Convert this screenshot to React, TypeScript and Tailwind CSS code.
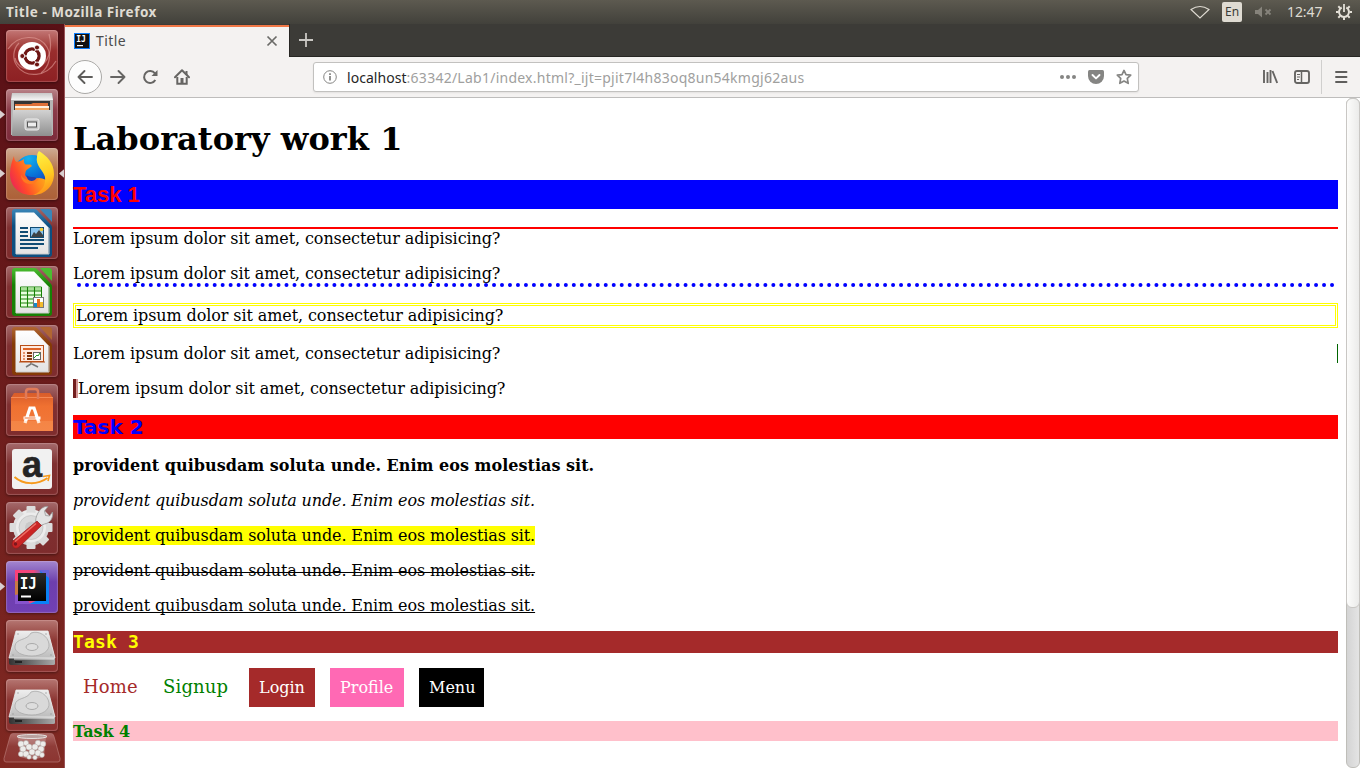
import React from "react";

const LOREM = "Lorem ipsum dolor sit amet, consectetur adipisicing?";
const PROVIDENT = "provident quibusdam soluta unde. Enim eos molestias sit.";

function UbuntuIcon() {
  return (
    <svg viewBox="0 0 52 52" className="size-full">
      <g fill="none" stroke="#e9a9a4" strokeOpacity=".55" strokeWidth="1.2">
        <path d="M2 19C12 4 33 4 41 17c5 9 2 20-6 26" />
        <path d="M43 4c4 15 0 29-12 34-10 4-20-1-22-10" />
        <path d="M50 31C40 48 20 48 11 36 6 29 7 19 13 13" />
      </g>
      <circle cx="26" cy="26" r="14" fill="#fff" />
      <circle cx="26" cy="26" r="7" fill="none" stroke="#6d1513" strokeWidth="3.4" />
      <path d="M26 26 18 26M26 26 30 19M26 26 30 33" stroke="#fff" strokeWidth="1" />
      <circle cx="26" cy="26" r="5.4" fill="#fff" />
      <g fill="#6d1513" stroke="#fff" strokeWidth=".9">
        <circle cx="16.3" cy="26" r="2.5" />
        <circle cx="31" cy="17.5" r="2.5" />
        <circle cx="31" cy="34.5" r="2.5" />
      </g>
    </svg>
  );
}

function FilesIcon() {
  return (
    <svg viewBox="0 0 52 52" className="size-full">
      <defs>
        <linearGradient id="fl" x2="0" y2="1"><stop stopColor="#d2d2d2" /><stop offset="1" stopColor="#8f8f8f" /></linearGradient>
        <linearGradient id="ft" x2="0" y2="1"><stop stopColor="#c9c9c9" /><stop offset="1" stopColor="#f5f5f5" /></linearGradient>
      </defs>
      <path d="M6 4h40l1 7v35H5V11z" fill="#777" />
      <path d="M6 4h40l1 7H5z" fill="url(#ft)" />
      <path d="M5 11h42v35H5z" fill="#b5b5b5" />
      <path d="M8 12h36v11H8z" fill="#343434" />
      <path d="M9 15h16l2-1h15v8H9z" fill="#df7038" />
      <path d="M9 17h34v2H9z" fill="#fff1df" />
      <path d="M9 19h34v3H9z" fill="#f2a865" />
      <path d="M7 21h38l1 26H6z" fill="url(#fl)" />
      <rect x="19" y="30" width="14" height="11" rx="2" fill="#c6c6c6" stroke="#eee" />
      <rect x="21.5" y="33" width="9" height="5" fill="#eee" stroke="#555" />
    </svg>
  );
}

function FirefoxIcon() {
  return (
    <svg viewBox="0 0 52 52" className="size-full">
      <defs>
        <linearGradient id="ff" x1="1" y1=".3" x2="0" y2=".8">
          <stop stopColor="#ffc21b" /><stop offset=".4" stopColor="#ff8a1c" /><stop offset=".7" stopColor="#ff4a2b" /><stop offset="1" stopColor="#e8205c" />
        </linearGradient>
        <radialGradient id="fg" cx=".4" cy=".1" r="1"><stop stopColor="#12b2ef" /><stop offset=".55" stopColor="#0868d4" /><stop offset="1" stopColor="#2c2489" /></radialGradient>
        <linearGradient id="fy" x2=".2" y2="1"><stop stopColor="#fff448" /><stop offset=".6" stopColor="#ffcf22" /><stop offset="1" stopColor="#ff981a" /></linearGradient>
      </defs>
      <circle cx="26" cy="25" r="18" fill="url(#fg)" />
      <path d="M8 8c0 3 1 5 2.500 6 3-1 5-1 7.500-3-.5 3 0 4 1.500 5.500h5l1.500 1.500-5.500 4c-1.500 2-1 4-1.500 5 2 4 7 6 14 3 5 0 9 4 11 3-4 9-11 14-19 14C13 47 4 38 4 26c0-7 2-13 4-18z" fill="url(#ff)" />
      <path d="M33 3c8 5 15 12 15 23 0 12-9 21-21 21 9-3 13-10 12-18-2-7-10-12-8-20 0-3 1-5 2-6z" fill="url(#fy)" />
      <path d="M15 27c3 5 8 6 12 4 2-1 4-1 6-1-2 4-5 6-9 6-5 0-9-4-9-9z" fill="#ff7a20" />
      <path d="M20.500 27c3 3 7 1 10 3-1 2-3 3-5 3-3 0-5-3-5-6z" fill="#263eab" />
    </svg>
  );
}

function PageIcon({ c, dark, id, children }: { c: string; dark: string; id: string; children: React.ReactNode }) {
  return (
    <svg viewBox="0 0 52 52" className="size-full">
      <defs>
        <linearGradient id={id} x2="0" y2="1"><stop stopColor={c} /><stop offset=".35" stopColor={dark} /><stop offset="1" stopColor={dark} /></linearGradient>
        <linearGradient id={id + "p"} x2="0" y2="1"><stop stopColor="#fff" /><stop offset="1" stopColor="#e3e3e3" /></linearGradient>
      </defs>
      <path d="M9 2h19q2 0 3 1l14 15q1 1 1 3v26q0 3-3 3H9q-3 0-3-3V5q0-3 3-3z" fill={`url(#${id})`} />
      <path d="M9.500 5.500H28L42.500 20.500V47h-33z" fill={`url(#${id}p)`} />
      <path d="M10 47h33V21" fill="none" stroke="#ccc" />
      <path d="M34 2h9q3 0 3 3v10z" fill={c} />
      {children}
    </svg>
  );
}

function WriterIcon() {
  return (
    <PageIcon id="wr" c="#3b86b8" dark="#0d4f80">
      <path d="M14 21h8M14 25h8M14 29h8M14 33h24M14 37h24M14 41h18" stroke="#104c74" strokeWidth="2" />
      <rect x="24.500" y="20.500" width="13" height="10" fill="#8bc4ed" stroke="#104c74" />
      <path d="m25 30 3-5 2 2 3-4 4 5v2z" fill="#3d4244" />
      <circle cx="35.500" cy="22.500" r="1.800" fill="#f3cc38" />
    </PageIcon>
  );
}

function CalcIcon() {
  return (
    <PageIcon id="ca" c="#4cbd31" dark="#178105">
      <path d="M14.500 21h21v20h-21z" fill="#eaffe0" stroke="#178105" />
      <path d="M15 21.500h20v3H15z" fill="#a8df98" />
      <path d="M14 25h22M14 29h22M14 33h22M14 37h22M21.500 21v20M28.500 21v20" stroke="#178105" strokeWidth="1.100" />
      <rect x="27.500" y="31.500" width="10" height="10" fill="#fff" stroke="#777" />
      <path d="M28 37h3v4h-3z" fill="#168bc8" /><path d="M31 33h3v8h-3z" fill="#e86f1c" /><path d="M34 36h3v5h-3z" fill="#f3bc2e" />
    </PageIcon>
  );
}

function ImpressIcon() {
  return (
    <PageIcon id="im" c="#b16632" dark="#853a06">
      <rect x="14.500" y="20.500" width="23" height="16" fill="#ffeade" stroke="#b84e16" />
      <path d="M17 24h18" stroke="#dd6325" strokeWidth="2" />
      <path d="M17 28h2M17 31h2M17 34h2" stroke="#e4936c" strokeWidth="2" />
      <path d="M21 28h5M21 31h5M21 34h5" stroke="#84360b" strokeWidth="2" />
      <rect x="27.500" y="27.500" width="7" height="7" fill="#fff" stroke="#666" />
      <path d="m28 33 3-3 1 1 2-3" stroke="#249c23" fill="none" />
      <path d="M25 37v2l-5 3m6-3 6 3" stroke="#777" strokeWidth="1.500" fill="none" />
      <path d="M13 37h26" stroke="#b84e16" />
    </PageIcon>
  );
}

function SoftwareIcon() {
  return (
    <svg viewBox="0 0 52 52" className="size-full">
      <defs><linearGradient id="sw" x2="0" y2="1"><stop stopColor="#d85c2a" /><stop offset=".35" stopColor="#f07131" /><stop offset="1" stopColor="#f27a3c" /></linearGradient></defs>
      <path d="M8 9h36l3 5v33H5V14z" fill="url(#sw)" />
      <path d="M5 13.500h42" stroke="#ff9a65" strokeWidth=".7" />
      <path d="M20 15V8q0-3 3-3h6q3 0 3 3v7" fill="none" stroke="#e07a58" strokeWidth="2.500" />
      <path d="m19 39 5-15h4l5 15M17.500 34h17" fill="none" stroke="#fff" strokeWidth="3.200" />
      <path d="M18.500 34h11" stroke="#ef7133" strokeWidth="1" />
      <path d="M5 37h42v10H5z" fill="#ffb070" fillOpacity=".25" />
    </svg>
  );
}

function AmazonIcon() {
  return (
    <svg viewBox="0 0 52 52" className="size-full">
      <rect x="6" y="6" width="40" height="40" rx="3" fill="#f1f1f1" />
      <text x="26" y="33.500" textAnchor="middle" fontFamily="Liberation Sans, sans-serif" fontWeight="bold" fontSize="36" fill="#242424" stroke="#242424" strokeWidth=".6">a</text>
      <path d="M8.500 34c9 8 23 8 33 1" fill="none" stroke="#f69a1c" strokeWidth="2" />
      <path d="m37 33.500 6.500-1-1.500 5.500" fill="none" stroke="#f69a1c" strokeWidth="1.600" />
    </svg>
  );
}

function SettingsIcon() {
  return (
    <svg viewBox="0 0 52 52" className="size-full">
      <defs><linearGradient id="gw" x2="0" y2="1"><stop stopColor="#efefef" /><stop offset="1" stopColor="#c8c8c8" /></linearGradient></defs>
      <g transform="translate(25 25.500)">
        <circle r="18" fill="url(#gw)" />
        {[0, 45, 90, 135].map((a) => <rect key={a} x="-4.500" y="-21.500" width="9" height="43" rx="1" fill="#dcdcdc" transform={`rotate(${a})`} />)}
        <circle r="15" fill="#ececec" /><circle r="12" fill="#dadada" stroke="#bbb" strokeWidth=".6" /><circle r="6" fill="#c9c9c9" />
      </g>
      <path d="M30 22c-1-3 0-8 2-11 3-5 6-7 10-6.500L38.500 9l1 4.500 4 .5 3-4c1 7-3 11-8 12l-5 2z" fill="#e4e4e4" stroke="#999" strokeWidth=".8" />
      <path d="m31 19 4.500 4.500L13 45c-4 3.500-9-1-6-6z" fill="#ca2525" stroke="#951b1b" strokeWidth=".7" />
      <path d="M30 21.500 9 39.500" stroke="#ee7066" strokeWidth="1.600" />
      <circle cx="9.500" cy="42" r="1.700" fill="#7d171d" />
    </svg>
  );
}

function IdeaIcon({ small = false }: { small?: boolean }) {
  if (small) {
    return (
      <svg viewBox="0 0 16 16" className="size-4">
        <path fill="#087bfa" d="M0 0h16v16H0z" /><path fill="#111" d="M1 1h14v14H1z" />
        <text x="2.200" y="8.800" fontFamily="DejaVu Sans Mono, monospace" fontWeight="bold" fontSize="8" fill="#fff">IJ</text>
        <path d="M3 12h6v1.200H3z" fill="#fff" />
      </svg>
    );
  }
  return (
    <svg viewBox="0 0 52 52" className="size-full">
      <defs>
        <linearGradient id="ij"><stop stopColor="#fb3f78" /><stop offset=".55" stopColor="#ee497e" /><stop offset="1" stopColor="#087cfa" /></linearGradient>
        <linearGradient id="ik" x2="0" y2="1"><stop stopColor="#2a2a2a" /><stop offset="1" stopColor="#000" /></linearGradient>
      </defs>
      <path d="M9 9h34v34H9z" fill="url(#ij)" />
      <path d="M9 20h7v13l-7 5z" fill="#c97943" /><path d="M9 34l9-2 6 11H9z" fill="#8753cd" />
      <path d="m34 9 9 7v27H23l16-7z" fill="#0a82f7" /><path d="m33 9 10 8v-8z" fill="#6a64d8" />
      <path d="M12 12h28v28H12z" fill="url(#ik)" />
      <text x="13.800" y="28" textLength="17" lengthAdjust="spacingAndGlyphs" fontFamily="DejaVu Sans Mono, monospace" fontWeight="bold" fontSize="16.500" fill="#fff">IJ</text>
      <path d="M15 34.500h10v2H15z" fill="#fff" />
    </svg>
  );
}

function DriveIcon({ id }: { id: string }) {
  return (
    <svg viewBox="0 0 52 52" className="size-full">
      <defs><linearGradient id={id} x2="0" y2="1"><stop stopColor="#eee" /><stop offset="1" stopColor="#bdbdbd" /></linearGradient><linearGradient id={id + "b"}><stop stopColor="#333" /><stop offset="1" stopColor="#aaa" /></linearGradient></defs>
      <path d="M10 11h32l7 27v6q0 1-2 1H5q-2 0-2-2v-5z" fill={`url(#${id}b)`} />
      <path d="M10 11h32l7 27H3z" fill={`url(#${id})`} stroke="#eee" strokeWidth=".8" />
      <path d="M25 13c8-3 17 3 18 11 1 7-7 12-17 12S8 32 9 26c1-8 12-5 16-13z" fill="#d9d9d9" stroke="#aaa" strokeWidth=".8" />
      <ellipse cx="26" cy="27" rx="6" ry="3.500" fill="#ddd" stroke="#aaa" />
      <path d="M8 39h40" stroke="#fff" strokeWidth=".8" /><path d="M9 41h7v2H9z" fill="#222" />
      <g fill="#999"><circle cx="12" cy="14" r=".7" /><circle cx="40" cy="14" r=".7" /><circle cx="7" cy="35" r=".7" /><circle cx="45" cy="35" r=".7" /></g>
    </svg>
  );
}

const paper: [number, number, number][] = [
  [18, 11, 3], [23, 10, 2.6], [35, 10, 2.8], [40, 11, 2.8], [20, 16, 3], [26, 14, 3], [32, 14, 3], [38, 16, 3],
  [18, 21, 2.6], [23, 21, 3], [29, 19, 3], [35, 20, 3], [39, 22, 2.4], [26, 24, 2.2], [32, 24.5, 2.2],
];

function TrashIcon() {
  return (
    <svg viewBox="0 0 58 30" className="h-[30px] w-[58px]">
      <defs><linearGradient id="tr" x2="0" y2="1"><stop stopColor="#b06a67" /><stop offset=".45" stopColor="#8f3c38" /><stop offset="1" stopColor="#8c3531" /></linearGradient></defs>
      <path d="M10 .5h38q2.500 0 3 3l6 22q.500 3.500-2 3.500H3q-2.500 0-2-3.500l6-22q.500-3 3-3z" fill="url(#tr)" stroke="#b77774" strokeOpacity=".7" />
      <path d="M15 4h28l-2 20q-12 4-24 0z" fill="#d5b7b5" fillOpacity=".4" />
      <g fill="#edecea" stroke="#b5b0ae" strokeWidth=".5">
        {paper.map(([x, y, r], i) => <circle key={i} cx={x} cy={y} r={r} />)}
      </g>
      <ellipse cx="29" cy="3.500" rx="15" ry="2" fill="#b9a09e" stroke="#e6e0df" />
    </svg>
  );
}

function Arrow({ side }: { side: "l" | "r" }) {
  return (
    <svg viewBox="0 0 6 10" className={side === "l" ? "absolute -left-[6px] top-[21px] h-[9px] w-[5px]" : "absolute -right-[6px] top-[21px] h-[9px] w-[5px]"}>
      <path d={side === "l" ? "M0 0v10l6-5z" : "M6 0v10L0 5z"} fill="#d9cfd0" />
    </svg>
  );
}

const TILE = "relative size-[52px] shrink-0 rounded-[4px] shadow-[inset_0_0_1px_1px_rgba(255,220,220,0.24),0_1px_3px_rgba(0,0,0,0.4)]";
const GLASS = "bg-linear-to-b from-[#a46a6c] via-[#7f3031] via-40% to-[#7e2c2d]";

const launcher = [
  { icon: <UbuntuIcon />, bg: "bg-linear-to-b from-[#c37775] via-[#992d2d] via-40% to-[#8d2023]" },
  { icon: <FilesIcon />, bg: "bg-linear-to-b from-[#b88288] via-[#8b3b49] via-40% to-[#7c2b3b]", left: true },
  { icon: <FirefoxIcon />, bg: "bg-linear-to-b from-[#ceac94] via-[#b8764c] via-40% to-[#ac6038]", left: true, right: true },
  { icon: <WriterIcon />, bg: GLASS },
  { icon: <CalcIcon />, bg: GLASS },
  { icon: <ImpressIcon />, bg: GLASS },
  { icon: <SoftwareIcon />, bg: GLASS },
  { icon: <AmazonIcon />, bg: GLASS },
  { icon: <SettingsIcon />, bg: GLASS },
  { icon: <IdeaIcon />, bg: "bg-linear-to-b from-[#a486cf] via-[#6d3eac] via-40% to-[#7140b4]", left: true },
  { icon: <DriveIcon id="d1" />, bg: "bg-linear-to-b from-[#b57672] via-[#8c3633] via-40% to-[#8a302e]" },
  { icon: <DriveIcon id="d2" />, bg: "bg-linear-to-b from-[#b57672] via-[#8c3633] via-40% to-[#8a302e]" },
];

function TopPanel() {
  return (
    <header className="flex h-6 shrink-0 items-center justify-between bg-linear-to-b from-[#5d5a50] to-[#42413b] pr-2 pl-[6px] text-[#dfdbd2]">
      <span className="text-[13.5px] font-bold leading-6 tracking-[0.52px]">Title - Mozilla Firefox</span>
      <div className="flex items-center">
        <svg viewBox="0 0 20 14" className="h-[14px] w-5"><path d="M1 4.500Q10-1.500 19 4.500L10 13z" fill="none" stroke="#dfdbd2" strokeWidth="1.100" /></svg>
        <span className="ml-3 flex h-5 w-5 items-center justify-center rounded-[2px] bg-[#dfdbd2] text-[12px] leading-5 text-[#3c3b37]">En</span>
        <svg viewBox="0 0 18 12" className="ml-3 h-3 w-[18px]"><path d="M1 4h3l4-3.500v11L4 8H1z" fill="#86837b" /><path d="m11.500 3.500 5 5m0-5-5 5" stroke="#86837b" strokeWidth="1.800" /></svg>
        <span className="ml-[15px] w-[36px] text-[14px] leading-6 tracking-[-0.1px]">12:47</span>
        <svg viewBox="0 0 16 16" className="ml-[13px] size-4" fill="none" stroke="#e4e0d7">
          <path d="M5.700 3.500a5 5 0 1 0 4.600 0" strokeWidth="2" /><path d="M8 0v8" strokeWidth="1.800" />
          <path d="m2.300 2.300 1.800 1.800m9.600-1.800-1.800 1.800M0 8h2.500m11 0H16M2.300 13.700l1.800-1.800m9.600 1.800-1.800-1.800M8 13.500V16" strokeWidth="2" />
        </svg>
      </div>
    </header>
  );
}

function TabStrip() {
  return (
    <div className="flex h-[33px] shrink-0 bg-[#3c3b37]">
      <div className="mt-px flex w-56 items-center border-t-2 border-[#f07746] bg-[#f4f2f1] pb-[2px] pl-[9px]">
        <IdeaIcon small />
        <span className="ml-[6px] flex-1 text-[14px] leading-5 tracking-[0.4px] text-[#4c4c4c]">Title</span>
        <svg viewBox="0 0 12 12" className="mr-[11px] size-3"><path d="m1.500 1.500 9 9m0-9-9 9" stroke="#6b6b68" strokeWidth="1.700" /></svg>
      </div>
      <div className="flex flex-1 items-center border-b border-l border-[#272623] pl-[9px]">
        <svg viewBox="0 0 14 14" className="size-[14px]"><path d="M7 0v14M0 7h14" stroke="#cac8c4" strokeWidth="1.800" /></svg>
      </div>
    </div>
  );
}

function Toolbar() {
  return (
    <div className="flex h-[41px] shrink-0 items-center border-b border-[#bebdbc] bg-[#f4f2f1] pr-[11px] pl-[3px]">
      <div className="flex size-[34px] items-center justify-center rounded-full border border-[#aaa9a7] bg-[#fdfdfd]">
        <svg viewBox="0 0 16 16" className="size-4" fill="none" stroke="#5e5d5b" strokeWidth="1.900" strokeLinecap="round" strokeLinejoin="round"><path d="M15 8H1.500M7.500 2l-6 6 6 6" /></svg>
      </div>
      <svg viewBox="0 0 16 16" className="ml-2 size-4" fill="none" stroke="#666563" strokeWidth="1.900" strokeLinecap="round" strokeLinejoin="round"><path d="M1 8h13.500M8.500 2l6 6-6 6" /></svg>
      <svg viewBox="0 0 16 16" className="ml-4 size-4"><path d="M13.300 11a6 6 0 1 1-.4-6.600" fill="none" stroke="#666563" strokeWidth="2" /><path d="M15.500 1v6h-6z" fill="#666563" /></svg>
      <svg viewBox="0 0 16 16" className="ml-4 size-4"><path d="M1 8.200 8 1.300l7 6.900" fill="none" stroke="#666563" strokeWidth="2" strokeLinecap="round" strokeLinejoin="round" /><path d="M12.500 2v4M3.300 8v6.800h9.400V8" fill="none" stroke="#666563" strokeWidth="2" /><path d="M6.500 9h3v6h-3z" fill="#666563" /></svg>
      <div className="ml-[123px] flex h-[30px] w-[826px] items-center rounded-[3px] border border-[#c2c1bf] bg-white pr-[6px] pl-[9px] shadow-[0_1px_2px_rgba(0,0,0,0.07)]">
        <svg viewBox="0 0 14 14" className="size-[14px]" fill="none" stroke="#858583"><circle cx="7" cy="7" r="6.300" /><path d="M7 6v4.500" strokeWidth="1.800" /><path d="M7 3.200V5" strokeWidth="1.800" /></svg>
        <span className="ml-[10px] flex-1 pt-px text-[14px] leading-5 tracking-[0.25px] text-[#a0a09e]"><span className="tracking-[0.05px] text-[#262626]">localhost</span>:63342/Lab1/index.html?_ijt=pjit7l4h83oq8un54kmgj62aus</span>
        <svg viewBox="0 0 16 4" className="h-1 w-4" fill="#858583"><circle cx="2" cy="2" r="2" /><circle cx="8" cy="2" r="2" /><circle cx="14" cy="2" r="2" /></svg>
        <svg viewBox="0 0 16 16" className="ml-3 size-4"><path d="M1.500 1h13Q16 1 16 2.500V7a8 8 0 0 1-16 0V2.500Q0 1 1.500 1z" fill="#858583" /><path d="m4.500 6 3.500 3.400L11.500 6" stroke="#fff" strokeWidth="1.900" strokeLinecap="round" strokeLinejoin="round" fill="none" /></svg>
        <svg viewBox="0 0 16 16" className="ml-3 size-4"><path d="m8 1.400 2 4.200 4.700.6-3.400 3.200.9 4.900L8 12l-4.200 2.300.9-4.900-3.400-3.200L6 5.600z" fill="none" stroke="#858583" strokeWidth="1.700" strokeLinejoin="round" /></svg>
      </div>
      <div className="flex flex-1 items-center justify-end">
        <svg viewBox="0 0 16 16" className="size-4" fill="none" stroke="#666563" strokeWidth="1.900"><path d="M2 1v13M5.500 3v11M8.500 1v13M10.500 2l4.700 12" /></svg>
        <svg viewBox="0 0 16 16" className="ml-4 size-4" fill="none" stroke="#666563"><rect x="1" y="2" width="14" height="12" rx="2" strokeWidth="1.900" /><path d="M7.500 2v12" strokeWidth="1.500" /><path d="M3 5.500h3M3 8h3M3 10.500h2" /></svg>
        <div className="ml-[11px] h-[34px] w-px bg-[#d0cfce]" />
        <svg viewBox="0 0 14 12" className="ml-[13px] h-3 w-[14px]"><path d="M1 1h10.500M1 6h10.500M1 11h10.500" stroke="#5f5e5c" strokeWidth="1.900" strokeLinecap="round" /></svg>
      </div>
    </div>
  );
}

function DottedRule() {
  return (
    <svg viewBox="0 0 1265 4" className="block h-1 w-full">
      <path d="M6 2h1253.200" stroke="#00f" strokeWidth="4" strokeLinecap="round" strokeDasharray="0 7.981" />
    </svg>
  );
}

function Page() {
  return (
    <main className="w-[1281px] shrink-0 overflow-hidden bg-white px-2 pt-[22px] font-['DejaVu_Serif',serif] text-[16px] leading-[19px] text-black">
      <h1 className="h-[38px] text-[32px] font-bold leading-[38px] tracking-[0.05px]">Laboratory work 1</h1>
      <h2 className="mt-[22px] h-[29px] bg-[#00f] font-['Liberation_Sans',sans-serif] text-[22px] font-bold leading-[29px] text-[#f00]">Task 1</h2>
      <div className="tracking-[-0.098px]">
        <p className="mt-[18px] border-t-2 border-[#f00]">{LOREM}</p>
        <div className="mt-4"><p>{LOREM}</p><DottedRule /></div>
        <p className="mt-4 border-[3px] border-double border-[#ff0]">{LOREM}</p>
        <p className="mt-4 border-r border-[#006400]">{LOREM}</p>
        <div className="mt-4 flex"><i className="w-[3px] bg-[#731d1d]" /><i className="w-[2px] bg-[#d29595]" /><p>{LOREM}</p></div>
      </div>
      <h3 className="mt-[17px] h-6 bg-[#f00] font-['DejaVu_Sans',sans-serif] text-[20px] font-bold leading-6 text-[#00f]">Task 2</h3>
      <p className="mt-[17px] font-bold tracking-[0.02px]">{PROVIDENT}</p>
      <div className="tracking-[-0.125px]">
        <p className="mt-4 italic">{PROVIDENT}</p>
        <p className="mt-4"><span className="bg-[#ff0]">{PROVIDENT}</span></p>
        <p className="mt-4 underline decoration-1 underline-offset-[-4px] [text-decoration-skip-ink:none]">{PROVIDENT}</p>
        <p className="mt-4 underline [text-decoration-skip-ink:none]">{PROVIDENT}</p>
      </div>
      <h4 className="mt-4 h-[22px] bg-[#a52a2a] font-['DejaVu_Sans_Mono',monospace] text-[18px] font-bold leading-[22px] tracking-[0.15px] text-[#ff0]">Task 3</h4>
      <nav className="mt-[15px] flex h-[39px] items-center">
        <a className="w-20 pb-[2px] pl-[10px] text-[18px] tracking-[0.1px] text-[#a52a2a]">Home</a>
        <a className="w-24 pb-[2px] pl-[10px] text-[18px] tracking-[0.15px] text-[#008000]">Signup</a>
        <a className="w-[66px] bg-[#a52a2a] p-[10px] text-white">Login</a>
        <a className="ml-[15px] w-[74px] bg-[#ff69b4] p-[10px] text-white">Profile</a>
        <a className="ml-[15px] w-[65px] bg-black p-[10px] text-white">Menu</a>
      </nav>
      <h5 className="mt-[14px] h-5 bg-[#ffc0cb] pt-px font-bold leading-5 tracking-[-0.1px] text-[#008000]">Task 4</h5>
    </main>
  );
}

export default function App() {
  return (
    <div className="flex h-[768px] w-[1360px] flex-col overflow-hidden font-['Noto_Sans',sans-serif]">
      <TopPanel />
      <div className="flex min-h-0 flex-1">
        <aside className="flex w-[65px] shrink-0 flex-col gap-[7px] overflow-hidden border-r border-[#995358] bg-linear-to-b from-[#591016] to-[#802922] pt-[6px] pl-[6px]">
          {launcher.map((item, i) => (
            <div key={i} className={`${TILE} ${item.bg}`}>
              {item.left && <Arrow side="l" />}
              {item.icon}
              {item.right && <Arrow side="r" />}
            </div>
          ))}
          <div className="-mt-[5px] -ml-[3px] h-[30px]"><TrashIcon /></div>
        </aside>
        <div className="flex min-w-0 flex-1 flex-col">
          <TabStrip />
          <Toolbar />
          <div className="flex min-h-0 flex-1">
            <Page />
            <div className="flex-1 rounded-[6px] border border-[#bfbeb9] bg-linear-to-r from-[#d4d4d4] to-[#e4e4e4]">
              <div className="-mx-px -mt-px h-[510px] rounded-[6px] border border-[#c9c7c4] bg-linear-to-r from-[#fcfcfb] to-[#ebebea]" />
            </div>
          </div>
        </div>
      </div>
    </div>
  );
}
